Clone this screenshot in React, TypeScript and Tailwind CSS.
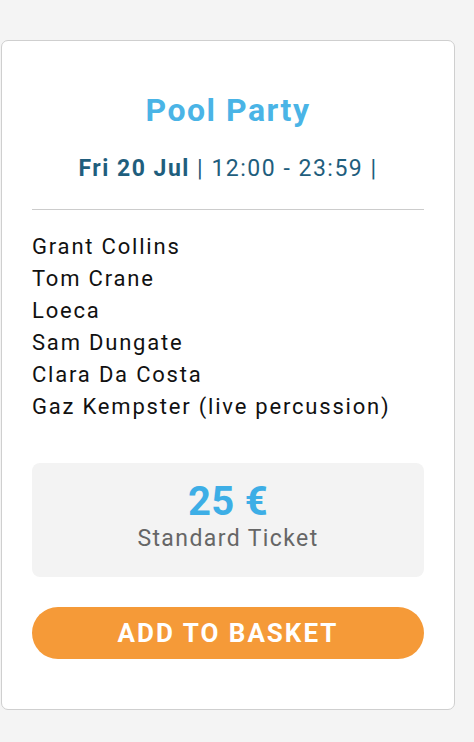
export default function App() {
  const artists = [
    "Grant Collins",
    "Tom Crane",
    "Loeca",
    "Sam Dungate",
    "Clara Da Costa",
    "Gaz Kempster (live percussion)",
  ];

  return (
    <div
      className="min-h-[742px] bg-[#f4f4f4] pt-[40px] pl-[1px]"
      style={{ fontFamily: "Roboto, 'Noto Sans', sans-serif" }}
    >
      <div className="w-[454px] bg-white border border-[#cfcfcf] rounded-[7px] px-[30px] pt-[51px] pb-[50px]">
        {/* Title */}
        <h2 className="text-center text-[32px] leading-[36px] font-bold tracking-[1.5px] text-[#4ab4e6]">
          Pool Party
        </h2>

        {/* Date / time */}
        <p className="mt-[27px] text-center text-[23px] leading-[28px] tracking-[1.5px] text-[#1f5e7d]">
          <span className="font-bold">Fri 20 Jul</span> | 12:00 - 23:59 |
        </p>

        <div className="mt-[26px] h-px bg-[#cccccc]" />

        {/* Line-up */}
        <ul className="mt-[21px] text-[22px] leading-[32px] tracking-[1.8px] text-[#111]">
          {artists.map((a) => (
            <li key={a}>{a}</li>
          ))}
        </ul>

        {/* Price */}
        <div className="mt-[40px] rounded-[8px] bg-[#f3f3f3] pt-[17px] pb-[24px] text-center">
          <div className="text-[40px] leading-[44px] font-bold tracking-[0.3px] text-[#3daee6]">
            25 €
          </div>
          <div className="mt-px text-[23px] leading-[28px] tracking-[1.4px] text-[#666]">
            Standard Ticket
          </div>
        </div>

        {/* Button */}
        <button className="mt-[30px] h-[52px] w-full rounded-full bg-[#f59a38] text-[26px] font-bold tracking-[2px] text-white uppercase">
          Add to basket
        </button>
      </div>
    </div>
  );
}
